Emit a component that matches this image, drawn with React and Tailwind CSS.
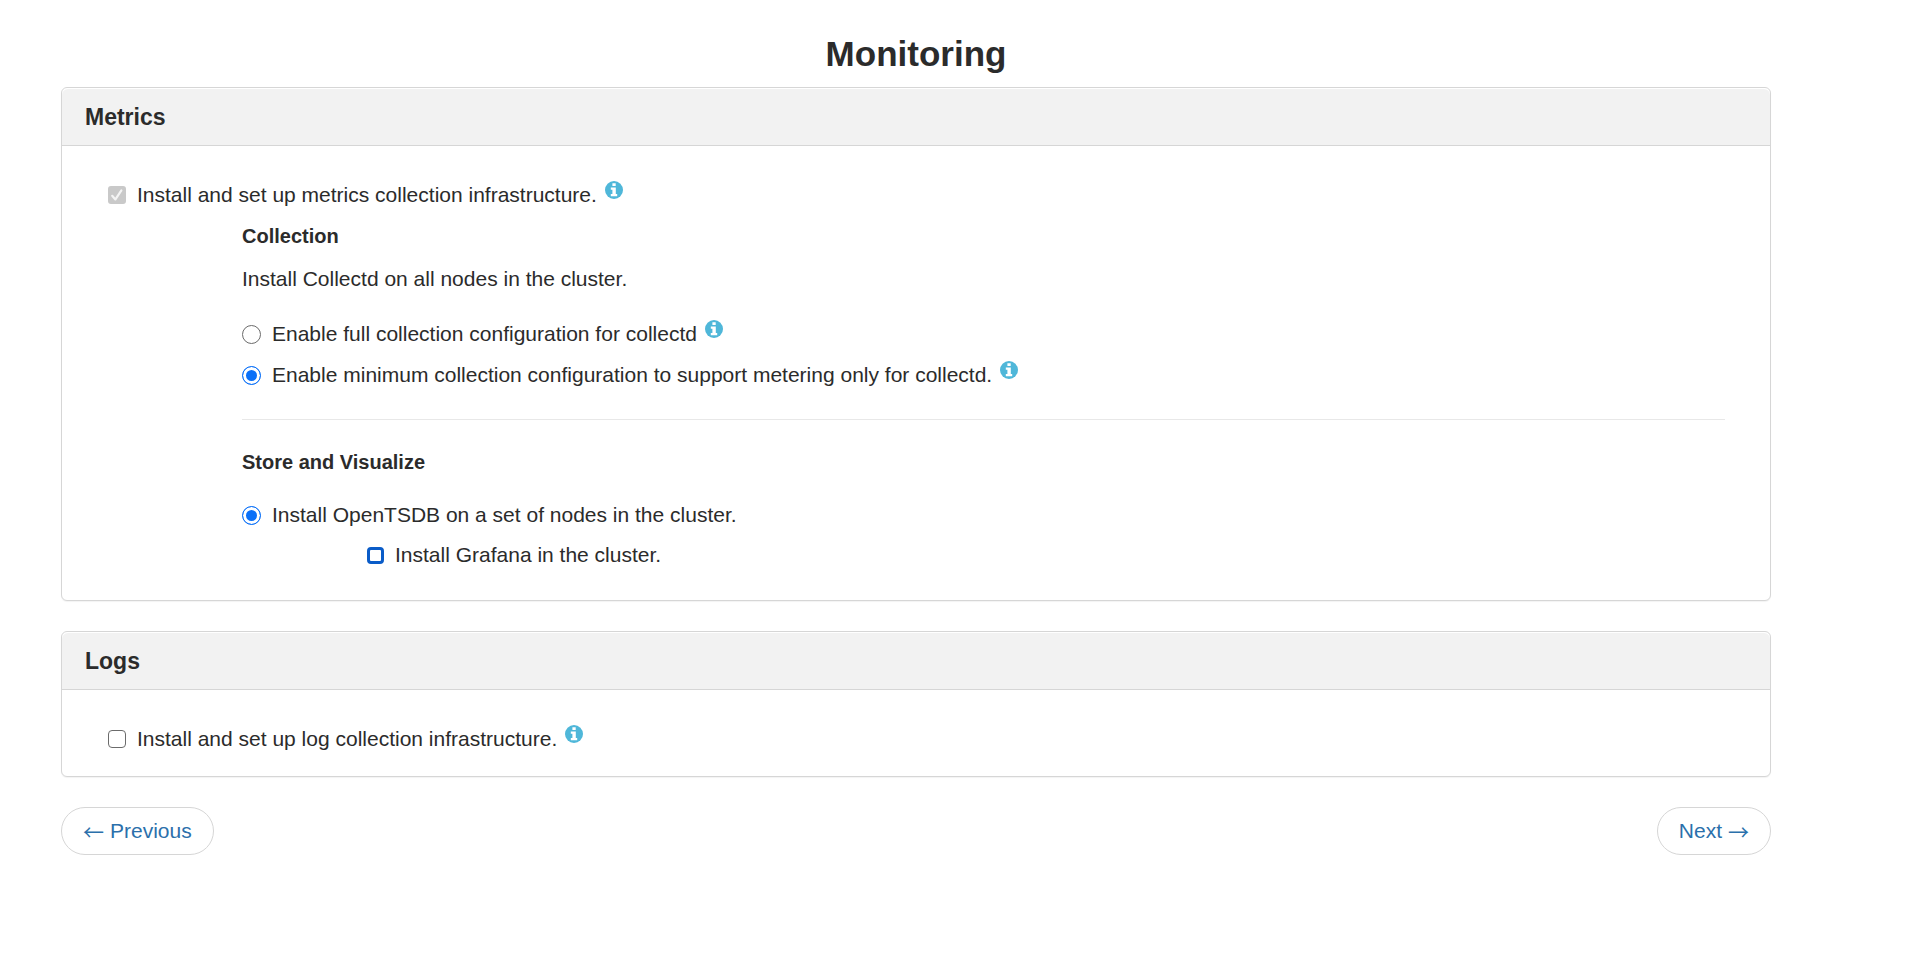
import { useState } from 'react';

function Panel({ title, children }) {
  return (
    <section className="rounded-md border border-[#d6d6d6] bg-white pt-px shadow-[0_1px_1px_rgba(0,0,0,0.05)]">
      <header className="flex h-[57px] items-center rounded-t-md border-b border-[#d6d6d6] bg-[#f2f2f2] px-[23px]">
        <h2 className="text-[23px] leading-6 font-bold">{title}</h2>
      </header>
      {children}
    </section>
  );
}

function InfoIcon() {
  return (
    <svg viewBox="0 0 18 18" className="mb-[11px] ml-2 h-[18px] w-[18px] shrink-0" role="img" aria-label="More information">
      <circle cx="9" cy="9" r="9" fill="#4fb7d9" />
      <path d="M7.4 2.2h3.3v2.7H7.4zM5.8 6.4h5v6.5h1.4v2.4H5.8v-2.4h1.6V8.7H5.8z" fill="#fff" />
    </svg>
  );
}

function Checkbox({ id, look, children, info, ...rest }) {
  return (
    <div className="flex h-[30px] items-center">
      <span className="relative flex shrink-0">
        <input id={id} type="checkbox" className={look} {...rest} />
        <svg
          viewBox="0 0 18 18"
          className="pointer-events-none absolute inset-0 hidden h-full w-full peer-checked:block"
          fill="none"
          stroke="#f4f4f4"
          strokeWidth="2.2"
          strokeLinecap="round"
          strokeLinejoin="round"
        >
          <path d="M4.2 9.8l3.2 3.6L13.4 4.4" />
        </svg>
      </span>
      <label htmlFor={id} className="ml-[11px]">{children}</label>
      {info && <InfoIcon />}
    </div>
  );
}

function Radio({ id, children, info, ...rest }) {
  return (
    <div className="flex h-[30px] items-center">
      <input
        id={id}
        type="radio"
        className="h-[19px] w-[19px] shrink-0 appearance-none rounded-full border border-[#6b6b6b] bg-white checked:border-[#0a70f8] checked:bg-[#0a70f8] checked:shadow-[inset_0_0_0_3px_#fff]"
        {...rest}
      />
      <label htmlFor={id} className="ml-[11px]">{children}</label>
      {info && <InfoIcon />}
    </div>
  );
}

const box = 'peer h-[18px] w-[18px] appearance-none rounded-[4px] border border-[#6b6b6b] bg-white checked:border-[#0a70f8] checked:bg-[#0a70f8]';
const boxDisabled = 'peer h-[18px] w-[18px] appearance-none rounded-[3px] bg-[#c9c9c9]';
const boxFocused = 'peer h-[17px] w-[17px] appearance-none rounded-[4px] border-[3px] border-[#0a5cc8] bg-white checked:bg-[#0a5cc8]';
const pager = 'flex h-12 items-center gap-[6px] rounded-full border border-[#d6d6d6] bg-white px-[21px] text-[#2b70ab] hover:bg-[#eeeeee]';
const arrow = "font-['Noto_Sans_CJK_SC',sans-serif] leading-[30px]";

export default function App() {
  const [collection, setCollection] = useState('minimum');
  return (
    <main className="min-h-screen bg-white pt-[33px] pr-[155px] pb-8 pl-[61px] font-['Liberation_Sans',Arial,sans-serif] text-[21px] leading-[30px] text-[#2b2b2b]">
      <h1 className="mb-3 text-center text-[35px] leading-[42px] font-bold">Monitoring</h1>

      <Panel title="Metrics">
        <div className="pt-[34px] pr-[45px] pb-[30px] pl-[46px]">
          <Checkbox id="metrics" look={boxDisabled} defaultChecked disabled info>
            Install and set up metrics collection infrastructure.
          </Checkbox>
          <div className="mt-[11px] pl-[134px]">
            <h3 className="text-[20px] font-bold">Collection</h3>
            <p className="mt-[13px] mb-[25px]">Install Collectd on all nodes in the cluster.</p>
            <div className="flex flex-col gap-[11px]">
              <Radio id="full" name="collection" checked={collection === 'full'} onChange={() => setCollection('full')} info>
                Enable full collection configuration for collectd
              </Radio>
              <Radio id="minimum" name="collection" checked={collection === 'minimum'} onChange={() => setCollection('minimum')} info>
                Enable minimum collection configuration to support metering only for collectd.
              </Radio>
            </div>
            <hr className="mt-[29px] mb-[27px] border-[#e8e8e8]" />
            <h3 className="mb-[23px] text-[20px] font-bold">Store and Visualize</h3>
            <Radio id="opentsdb" name="store" defaultChecked>
              Install OpenTSDB on a set of nodes in the cluster.
            </Radio>
            <div className="mt-[10px] pl-[125px]">
              <Checkbox id="grafana" look={boxFocused}>Install Grafana in the cluster.</Checkbox>
            </div>
          </div>
        </div>
      </Panel>

      <div className="mt-[30px]">
        <Panel title="Logs">
          <div className="pt-[34px] pr-[45px] pb-[22px] pl-[46px]">
            <Checkbox id="logs" look={box} info>Install and set up log collection infrastructure.</Checkbox>
          </div>
        </Panel>
      </div>

      <nav className="mt-[30px] flex justify-between" aria-label="Pager">
        <a href="#previous" className={pager}><span className={arrow}>←</span> Previous</a>
        <a href="#next" className={pager}>Next <span className={arrow}>→</span></a>
      </nav>
    </main>
  );
}
